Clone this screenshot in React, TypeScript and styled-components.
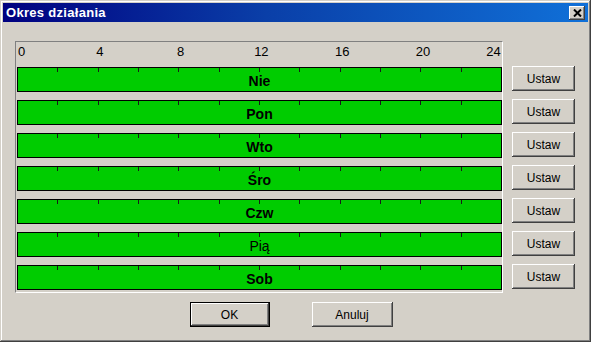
import React from 'react';
import styled, { createGlobalStyle } from 'styled-components';

const GlobalStyle = createGlobalStyle`
  html, body {
    margin: 0;
    padding: 0;
    background: #d4d0c8;
  }
  body {
    font-family: 'Liberation Sans', Arial, sans-serif;
  }
`;

const days = [
  { name: 'Nie', bold: true },
  { name: 'Pon', bold: true },
  { name: 'Wto', bold: true },
  { name: 'Śro', bold: true },
  { name: 'Czw', bold: true },
  { name: 'Pią', bold: false },
  { name: 'Sob', bold: true },
];

const hours = ['0', '4', '8', '12', '16', '20', '24'];

const Window = styled.div`
  box-sizing: border-box;
  width: 591px;
  height: 342px;
  padding: 3px;
  display: flex;
  flex-direction: column;
  background: #d4d0c8;
  box-shadow: inset -1px -1px #404040, inset 1px 1px #d4d0c8,
    inset -2px -2px #808080, inset 2px 2px #ffffff;
`;

const TitleBar = styled.div`
  height: 19px;
  display: flex;
  align-items: center;
  justify-content: space-between;
  padding: 0 3px 0 3px;
  background: linear-gradient(to right, #000080 0%, #0a3fa8 45%, #1070d8 100%);
`;

const Title = styled.span`
  color: #ffffff;
  font-weight: bold;
  font-size: 13px;
  letter-spacing: 0.3px;
`;

const CloseButton = styled.button`
  box-sizing: border-box;
  width: 16px;
  height: 14px;
  padding: 0;
  border: none;
  display: flex;
  align-items: center;
  justify-content: center;
  background: #d4d0c8;
  box-shadow: inset -1px -1px #404040, inset 1px 1px #ffffff,
    inset -2px -2px #808080, inset 2px 2px #d4d0c8;
`;

const Body = styled.div`
  flex: 1;
  display: flex;
  flex-direction: column;
  padding: 19px 13px 0 12px;
`;

const Main = styled.div`
  display: flex;
  gap: 9px;
`;

const Panel = styled.div`
  box-sizing: border-box;
  width: 488px;
  height: 252px;
  padding: 0 1px 2px 1px;
  border-top: 1px solid #808080;
  border-left: 1px solid #808080;
  border-right: 1px solid #ffffff;
  border-bottom: 1px solid #ffffff;
  display: flex;
  flex-direction: column;
  gap: 8px;
`;

const Ruler = styled.div`
  display: flex;
  align-items: flex-end;
  height: 17px;
  width: 485px;
`;

const HourLabel = styled.span<{ $edge?: 'start' | 'end' }>`
  width: ${({ $edge }) => ($edge ? '40.4px' : '80.8px')};
  font-size: 13px;
  line-height: 14px;
  color: #000;
  text-align: ${({ $edge }) =>
    $edge === 'start' ? 'left' : $edge === 'end' ? 'right' : 'center'};
  padding: ${({ $edge }) =>
    $edge === 'start' ? '0 0 0 1px' : $edge === 'end' ? '0 1px 0 0' : '0 0 0 4px'};
  box-sizing: border-box;
`;

const Bar = styled.div`
  position: relative;
  box-sizing: border-box;
  width: 485px;
  height: 25px;
  background: #00cc00;
  border: 1px solid #000;
  display: flex;
  align-items: center;
  justify-content: center;
`;

const Ticks = styled.div`
  position: absolute;
  top: 0;
  left: 0;
  right: 0;
  height: 4px;
  display: flex;
`;

const Tick = styled.span`
  flex: 1;
  border-right: 1px solid #1a1a1a;

  &:last-child {
    border-right: none;
  }
`;

const DayLabel = styled.span<{ $bold: boolean }>`
  font-size: 14px;
  font-weight: ${({ $bold }) => ($bold ? 'bold' : 'normal')};
  color: #000;
  padding-top: 3px;
`;

const SideButtons = styled.div`
  display: flex;
  flex-direction: column;
  gap: 8px;
  padding-top: 25px;
`;

const WinButton = styled.button<{ $default?: boolean }>`
  box-sizing: border-box;
  width: ${({ $default }) => ($default ? '80px' : '63px')};
  height: 25px;
  padding: 0;
  border: ${({ $default }) => ($default ? '1px solid #000' : 'none')};
  background: #d4d0c8;
  font-family: 'Liberation Sans', Arial, sans-serif;
  font-size: 12px;
  color: #000;
  box-shadow: inset -1px -1px #404040, inset 1px 1px #ffffff,
    inset -2px -2px #808080, inset 2px 2px #d4d0c8;
`;

const Footer = styled.div`
  display: flex;
  justify-content: center;
  gap: 42px;
  padding: 9px 8px 0 0;
`;

const WideButton = styled(WinButton)`
  width: 81px;
`;

const App: React.FC = () => {
  return (
    <>
      <GlobalStyle />
      <Window>
        <TitleBar>
          <Title>Okres działania</Title>
          <CloseButton>
            <svg width="9" height="8" viewBox="0 0 9 8">
              <path d="M1 0.5 L8 7.5 M8 0.5 L1 7.5" stroke="#000" strokeWidth="2" />
            </svg>
          </CloseButton>
        </TitleBar>
        <Body>
          <Main>
            <Panel>
              <Ruler>
                {hours.map((h, i) => (
                  <HourLabel
                    key={h}
                    $edge={i === 0 ? 'start' : i === hours.length - 1 ? 'end' : undefined}
                  >
                    {h}
                  </HourLabel>
                ))}
              </Ruler>
              {days.map((d) => (
                <Bar key={d.name}>
                  <Ticks>
                    {Array.from({ length: 12 }).map((_, i) => (
                      <Tick key={i} />
                    ))}
                  </Ticks>
                  <DayLabel $bold={d.bold}>{d.name}</DayLabel>
                </Bar>
              ))}
            </Panel>
            <SideButtons>
              {days.map((d) => (
                <WinButton key={d.name}>Ustaw</WinButton>
              ))}
            </SideButtons>
          </Main>
          <Footer>
            <WinButton $default>OK</WinButton>
            <WideButton>Anuluj</WideButton>
          </Footer>
        </Body>
      </Window>
    </>
  );
};

export default App;
